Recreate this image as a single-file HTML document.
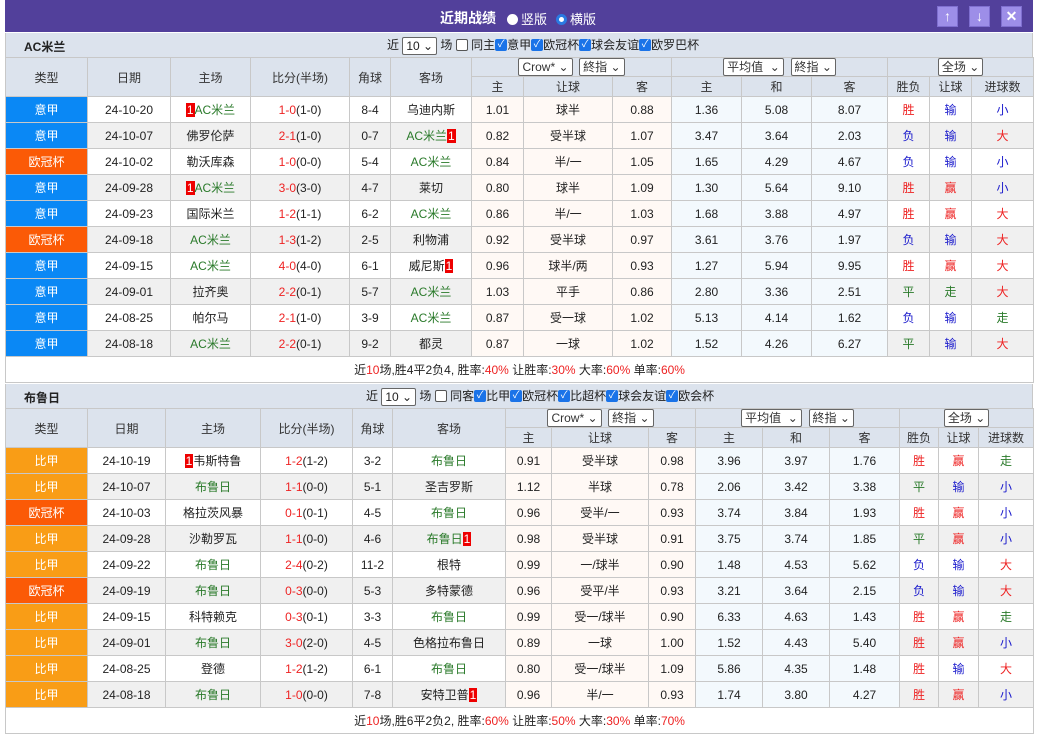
<!DOCTYPE html>
<html><head><meta charset="utf-8"><style>
*{box-sizing:border-box;margin:0;padding:0}
body{width:1038px;height:735px;background:#fff;font-family:"Liberation Sans","Noto Sans CJK SC",sans-serif;font-size:12px;color:#222;overflow:hidden;position:relative}
.bar{position:absolute;left:5px;top:0;width:1028px;height:32px;background:#52409b;color:#fff}
.bar .t{position:absolute;left:435px;top:8px;font-weight:bold;font-size:14px}
.bar .r{position:absolute;top:9px;font-size:13px}
.dot{display:inline-block;width:11px;height:11px;border-radius:50%;background:#fff;vertical-align:-1px;margin-right:3px}
.dot.s{background:#fff;border:3px solid #2a7ae2}
.btn{position:absolute;top:6px;width:21px;height:21px;background:#9d8ee8;border:1px solid #7f6fd0;color:#fff;text-align:center;font-size:14px;line-height:19px;font-weight:bold}
.sec{position:absolute;left:5px;width:1028px}
.tt{height:24px;background:#dce3ed;position:relative;border-left:1px solid #c8c8c8;border-right:1px solid #c8c8c8}
.tt b{position:absolute;left:18px;top:5px;font-size:12px}
.tt .f{position:absolute;top:3px;font-size:12px;white-space:nowrap;line-height:18px}
.sel{display:inline-block;border:1px solid #666;background:#fff;height:18px;line-height:16px;padding:0 3px;font-size:12px;vertical-align:middle;border-radius:2px}
.cb{display:inline-block;width:12px;height:12px;background:#1a73e8;color:#fff;font-size:10px;line-height:12px;text-align:center;vertical-align:middle;border-radius:2px;margin-top:-2px}
.cb.e{background:#fff;border:1px solid #555}
table{border-collapse:collapse;table-layout:fixed;width:1028px}
td{border:1px solid #c8c8c8;text-align:center;height:26px;white-space:nowrap;overflow:hidden;font-size:12px}
tr.h td{background:#dce3ed;height:20px;color:#333}
tr.h1 td{height:19px}
tr.g td{background:#f0f0f0}
td.p{background:#fff9f5!important}
td.b{background:#f3f9fd!important}
td.yj{background:#0a88f5!important;color:#fff}
td.og{background:#fb5a06!important;color:#fff}
td.bj{background:#f99d16!important;color:#fff}
.gr{color:#2a7a2a}.rd{color:#e22}.bl{color:#1a1acc}
.n{background:#e00;color:#fff;padding:0 1px}
td.sum{height:26px;background:#fff}
</style></head><body>
<div class="bar"><span class="t">近期战绩</span>
<span class="r" style="left:502px"><span class="dot"></span>竖版</span>
<span class="r" style="left:551px"><span class="dot s"></span>横版</span>
<div class="btn" style="left:932px">↑</div><div class="btn" style="left:964px">↓</div><div class="btn" style="left:996px">✕</div>
</div>

<div class="sec" style="top:33px">
<div class="tt"><b>AC米兰</b>
<span class="f" style="left:381px">近 <span class="sel">10 ⌄</span> 场 <span class="cb e"></span> 同主<span class="cb">✓</span>意甲<span class="cb">✓</span>欧冠杯<span class="cb">✓</span>球会友谊<span class="cb">✓</span>欧罗巴杯</span></div>
<table>
<colgroup><col style="width:82px"><col style="width:83px"><col style="width:80px"><col style="width:99px"><col style="width:41px"><col style="width:81px"><col style="width:52px"><col style="width:89px"><col style="width:59px"><col style="width:70px"><col style="width:70px"><col style="width:76px"><col style="width:42px"><col style="width:42px"><col style="width:62px"></colgroup>
<tr class="h h1"><td rowspan="2">类型</td><td rowspan="2">日期</td><td rowspan="2">主场</td><td rowspan="2">比分(半场)</td><td rowspan="2">角球</td><td rowspan="2">客场</td><td colspan="3"><span class="sel">Crow* ⌄</span> &nbsp;<span class="sel">終指 ⌄</span></td><td colspan="3"><span class="sel">平均值 &nbsp;⌄</span> &nbsp;<span class="sel">終指 ⌄</span></td><td colspan="3"><span class="sel">全场 ⌄</span></td></tr>
<tr class="h"><td>主</td><td>让球</td><td>客</td><td>主</td><td>和</td><td>客</td><td>胜负</td><td>让球</td><td>进球数</td></tr>
<tr><td class="yj">意甲</td><td>24-10-20</td><td><span class="n">1</span><span class="gr">AC米兰</span></td><td><span class="rd">1-0</span>(1-0)</td><td>8-4</td><td>乌迪内斯</td><td class="p">1.01</td><td class="p">球半</td><td class="p">0.88</td><td class="b">1.36</td><td class="b">5.08</td><td class="b">8.07</td><td class="rd">胜</td><td class="bl">输</td><td class="bl">小</td></tr>
<tr class="g"><td class="yj">意甲</td><td>24-10-07</td><td>佛罗伦萨</td><td><span class="rd">2-1</span>(1-0)</td><td>0-7</td><td><span class="gr">AC米兰</span><span class="n">1</span></td><td class="p">0.82</td><td class="p">受半球</td><td class="p">1.07</td><td class="b">3.47</td><td class="b">3.64</td><td class="b">2.03</td><td class="bl">负</td><td class="bl">输</td><td class="rd">大</td></tr>
<tr><td class="og">欧冠杯</td><td>24-10-02</td><td>勒沃库森</td><td><span class="rd">1-0</span>(0-0)</td><td>5-4</td><td class="gr">AC米兰</td><td class="p">0.84</td><td class="p">半/一</td><td class="p">1.05</td><td class="b">1.65</td><td class="b">4.29</td><td class="b">4.67</td><td class="bl">负</td><td class="bl">输</td><td class="bl">小</td></tr>
<tr class="g"><td class="yj">意甲</td><td>24-09-28</td><td><span class="n">1</span><span class="gr">AC米兰</span></td><td><span class="rd">3-0</span>(3-0)</td><td>4-7</td><td>莱切</td><td class="p">0.80</td><td class="p">球半</td><td class="p">1.09</td><td class="b">1.30</td><td class="b">5.64</td><td class="b">9.10</td><td class="rd">胜</td><td class="rd">赢</td><td class="bl">小</td></tr>
<tr><td class="yj">意甲</td><td>24-09-23</td><td>国际米兰</td><td><span class="rd">1-2</span>(1-1)</td><td>6-2</td><td class="gr">AC米兰</td><td class="p">0.86</td><td class="p">半/一</td><td class="p">1.03</td><td class="b">1.68</td><td class="b">3.88</td><td class="b">4.97</td><td class="rd">胜</td><td class="rd">赢</td><td class="rd">大</td></tr>
<tr class="g"><td class="og">欧冠杯</td><td>24-09-18</td><td class="gr">AC米兰</td><td><span class="rd">1-3</span>(1-2)</td><td>2-5</td><td>利物浦</td><td class="p">0.92</td><td class="p">受半球</td><td class="p">0.97</td><td class="b">3.61</td><td class="b">3.76</td><td class="b">1.97</td><td class="bl">负</td><td class="bl">输</td><td class="rd">大</td></tr>
<tr><td class="yj">意甲</td><td>24-09-15</td><td class="gr">AC米兰</td><td><span class="rd">4-0</span>(4-0)</td><td>6-1</td><td>威尼斯<span class="n">1</span></td><td class="p">0.96</td><td class="p">球半/两</td><td class="p">0.93</td><td class="b">1.27</td><td class="b">5.94</td><td class="b">9.95</td><td class="rd">胜</td><td class="rd">赢</td><td class="rd">大</td></tr>
<tr class="g"><td class="yj">意甲</td><td>24-09-01</td><td>拉齐奥</td><td><span class="rd">2-2</span>(0-1)</td><td>5-7</td><td class="gr">AC米兰</td><td class="p">1.03</td><td class="p">平手</td><td class="p">0.86</td><td class="b">2.80</td><td class="b">3.36</td><td class="b">2.51</td><td class="gr">平</td><td class="gr">走</td><td class="rd">大</td></tr>
<tr><td class="yj">意甲</td><td>24-08-25</td><td>帕尔马</td><td><span class="rd">2-1</span>(1-0)</td><td>3-9</td><td class="gr">AC米兰</td><td class="p">0.87</td><td class="p">受一球</td><td class="p">1.02</td><td class="b">5.13</td><td class="b">4.14</td><td class="b">1.62</td><td class="bl">负</td><td class="bl">输</td><td class="gr">走</td></tr>
<tr class="g"><td class="yj">意甲</td><td>24-08-18</td><td class="gr">AC米兰</td><td><span class="rd">2-2</span>(0-1)</td><td>9-2</td><td>都灵</td><td class="p">0.87</td><td class="p">一球</td><td class="p">1.02</td><td class="b">1.52</td><td class="b">4.26</td><td class="b">6.27</td><td class="gr">平</td><td class="bl">输</td><td class="rd">大</td></tr>
<tr><td colspan="15" class="sum">近<span class="rd">10</span>场,胜4平2负4, 胜率:<span class="rd">40%</span> 让胜率:<span class="rd">30%</span> 大率:<span class="rd">60%</span> 单率:<span class="rd">60%</span></td></tr>
</table></div>

<div class="sec" style="top:384px">
<div class="tt"><b>布鲁日</b>
<span class="f" style="left:360px">近 <span class="sel">10 ⌄</span> 场 <span class="cb e"></span> 同客<span class="cb">✓</span>比甲<span class="cb">✓</span>欧冠杯<span class="cb">✓</span>比超杯<span class="cb">✓</span>球会友谊<span class="cb">✓</span>欧会杯</span></div>
<table>
<colgroup><col style="width:82px"><col style="width:78px"><col style="width:95px"><col style="width:92px"><col style="width:40px"><col style="width:113px"><col style="width:46px"><col style="width:97px"><col style="width:47px"><col style="width:67px"><col style="width:67px"><col style="width:70px"><col style="width:39px"><col style="width:40px"><col style="width:55px"></colgroup>
<tr class="h h1"><td rowspan="2">类型</td><td rowspan="2">日期</td><td rowspan="2">主场</td><td rowspan="2">比分(半场)</td><td rowspan="2">角球</td><td rowspan="2">客场</td><td colspan="3"><span class="sel">Crow* ⌄</span> &nbsp;<span class="sel">終指 ⌄</span></td><td colspan="3"><span class="sel">平均值 &nbsp;⌄</span> &nbsp;<span class="sel">終指 ⌄</span></td><td colspan="3"><span class="sel">全场 ⌄</span></td></tr>
<tr class="h"><td>主</td><td>让球</td><td>客</td><td>主</td><td>和</td><td>客</td><td>胜负</td><td>让球</td><td>进球数</td></tr>
<tr><td class="bj">比甲</td><td>24-10-19</td><td><span class="n">1</span>韦斯特鲁</td><td><span class="rd">1-2</span>(1-2)</td><td>3-2</td><td class="gr">布鲁日</td><td class="p">0.91</td><td class="p">受半球</td><td class="p">0.98</td><td class="b">3.96</td><td class="b">3.97</td><td class="b">1.76</td><td class="rd">胜</td><td class="rd">赢</td><td class="gr">走</td></tr>
<tr class="g"><td class="bj">比甲</td><td>24-10-07</td><td class="gr">布鲁日</td><td><span class="rd">1-1</span>(0-0)</td><td>5-1</td><td>圣吉罗斯</td><td class="p">1.12</td><td class="p">半球</td><td class="p">0.78</td><td class="b">2.06</td><td class="b">3.42</td><td class="b">3.38</td><td class="gr">平</td><td class="bl">输</td><td class="bl">小</td></tr>
<tr><td class="og">欧冠杯</td><td>24-10-03</td><td>格拉茨风暴</td><td><span class="rd">0-1</span>(0-1)</td><td>4-5</td><td class="gr">布鲁日</td><td class="p">0.96</td><td class="p">受半/一</td><td class="p">0.93</td><td class="b">3.74</td><td class="b">3.84</td><td class="b">1.93</td><td class="rd">胜</td><td class="rd">赢</td><td class="bl">小</td></tr>
<tr class="g"><td class="bj">比甲</td><td>24-09-28</td><td>沙勒罗瓦</td><td><span class="rd">1-1</span>(0-0)</td><td>4-6</td><td><span class="gr">布鲁日</span><span class="n">1</span></td><td class="p">0.98</td><td class="p">受半球</td><td class="p">0.91</td><td class="b">3.75</td><td class="b">3.74</td><td class="b">1.85</td><td class="gr">平</td><td class="rd">赢</td><td class="bl">小</td></tr>
<tr><td class="bj">比甲</td><td>24-09-22</td><td class="gr">布鲁日</td><td><span class="rd">2-4</span>(0-2)</td><td>11-2</td><td>根特</td><td class="p">0.99</td><td class="p">一/球半</td><td class="p">0.90</td><td class="b">1.48</td><td class="b">4.53</td><td class="b">5.62</td><td class="bl">负</td><td class="bl">输</td><td class="rd">大</td></tr>
<tr class="g"><td class="og">欧冠杯</td><td>24-09-19</td><td class="gr">布鲁日</td><td><span class="rd">0-3</span>(0-0)</td><td>5-3</td><td>多特蒙德</td><td class="p">0.96</td><td class="p">受平/半</td><td class="p">0.93</td><td class="b">3.21</td><td class="b">3.64</td><td class="b">2.15</td><td class="bl">负</td><td class="bl">输</td><td class="rd">大</td></tr>
<tr><td class="bj">比甲</td><td>24-09-15</td><td>科特赖克</td><td><span class="rd">0-3</span>(0-1)</td><td>3-3</td><td class="gr">布鲁日</td><td class="p">0.99</td><td class="p">受一/球半</td><td class="p">0.90</td><td class="b">6.33</td><td class="b">4.63</td><td class="b">1.43</td><td class="rd">胜</td><td class="rd">赢</td><td class="gr">走</td></tr>
<tr class="g"><td class="bj">比甲</td><td>24-09-01</td><td class="gr">布鲁日</td><td><span class="rd">3-0</span>(2-0)</td><td>4-5</td><td>色格拉布鲁日</td><td class="p">0.89</td><td class="p">一球</td><td class="p">1.00</td><td class="b">1.52</td><td class="b">4.43</td><td class="b">5.40</td><td class="rd">胜</td><td class="rd">赢</td><td class="bl">小</td></tr>
<tr><td class="bj">比甲</td><td>24-08-25</td><td>登德</td><td><span class="rd">1-2</span>(1-2)</td><td>6-1</td><td class="gr">布鲁日</td><td class="p">0.80</td><td class="p">受一/球半</td><td class="p">1.09</td><td class="b">5.86</td><td class="b">4.35</td><td class="b">1.48</td><td class="rd">胜</td><td class="bl">输</td><td class="rd">大</td></tr>
<tr class="g"><td class="bj">比甲</td><td>24-08-18</td><td class="gr">布鲁日</td><td><span class="rd">1-0</span>(0-0)</td><td>7-8</td><td>安特卫普<span class="n">1</span></td><td class="p">0.96</td><td class="p">半/一</td><td class="p">0.93</td><td class="b">1.74</td><td class="b">3.80</td><td class="b">4.27</td><td class="rd">胜</td><td class="rd">赢</td><td class="bl">小</td></tr>
<tr><td colspan="15" class="sum">近<span class="rd">10</span>场,胜6平2负2, 胜率:<span class="rd">60%</span> 让胜率:<span class="rd">50%</span> 大率:<span class="rd">30%</span> 单率:<span class="rd">70%</span></td></tr>
</table></div>
</body></html>
